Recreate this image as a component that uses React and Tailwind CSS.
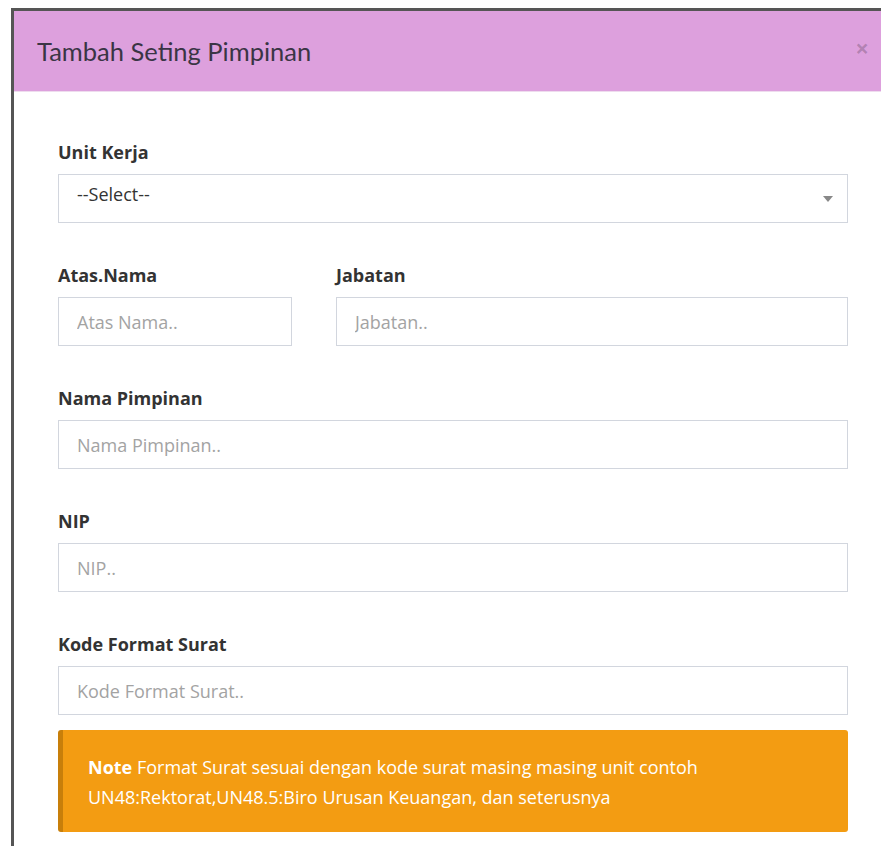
import React from 'react';

const font = { fontFamily: '"Open Sans", Lato, sans-serif' };

function Field({ label, children }) {
  return (
    <div className="mb-[42px]">
      <label className="block h-[22px] text-[18px] leading-[20px] font-bold text-[#333] mb-[10px]">
        {label}
      </label>
      {children}
    </div>
  );
}

function TextInput({ placeholder }) {
  return (
    <input
      type="text"
      placeholder={placeholder}
      className="block h-[49px] w-full border border-[#d2d6de] bg-white px-[18px] text-[18px] text-[#555] placeholder:text-[#a3a3a3] outline-none"
      style={font}
    />
  );
}

export default function App() {
  return (
    <div className="h-[846px] w-full overflow-hidden bg-white pl-[11px] pt-[8px]" style={font}>
      <div className="h-full border-l-[3px] border-t-[3px] border-[#555] bg-white">
        <div className="flex h-[81px] items-center justify-between border-b border-[#eedcee] bg-[#dda0dd] pl-[23px] pr-[12px]">
          <h4 className="text-[25.5px] font-normal text-[#3a3545]" style={{ fontFamily: 'Lato, sans-serif' }}>
            Tambah Seting Pimpinan
          </h4>
          <button className="text-[24px] leading-none font-bold text-black/20 pb-[6px]">×</button>
        </div>

        <div className="pl-[44px] pr-[33px] pt-[50px]">
          <Field label="Unit Kerja">
            <div className="flex h-[49px] items-center justify-between border border-[#d2d6de] pl-[18px] pr-[14px] pb-[9px]">
              <span className="text-[18px] text-[#333]">--Select--</span>
              <svg width="10" height="6" viewBox="0 0 10 6" className="mt-[9px]">
                <path d="M0 0h10L5 6z" fill="#888" />
              </svg>
            </div>
          </Field>

          <div className="flex gap-[44px]">
            <div className="w-[234px]">
              <Field label="Atas.Nama">
                <TextInput placeholder="Atas Nama.." />
              </Field>
            </div>
            <div className="flex-1">
              <Field label="Jabatan">
                <TextInput placeholder="Jabatan.." />
              </Field>
            </div>
          </div>

          <Field label="Nama Pimpinan">
            <TextInput placeholder="Nama Pimpinan.." />
          </Field>

          <Field label="NIP">
            <TextInput placeholder="NIP.." />
          </Field>

          <div className="mb-[15px]">
            <label className="block h-[22px] text-[18px] leading-[20px] font-bold text-[#333] mb-[10px]">
              Kode Format Surat
            </label>
            <TextInput placeholder="Kode Format Surat.." />
          </div>

          <div className="h-[102px] rounded-[3px] border-l-[5px] border-[#c87f0a] bg-[#f39c12] pl-[25px] pr-[30px] pt-[22px] text-[18px] leading-[30px] text-white">
            <b>Note</b> Format Surat sesuai dengan kode surat masing masing unit contoh
            <br />
            UN48:Rektorat,UN48.5:Biro Urusan Keuangan, dan seterusnya
          </div>
        </div>
      </div>
    </div>
  );
}
